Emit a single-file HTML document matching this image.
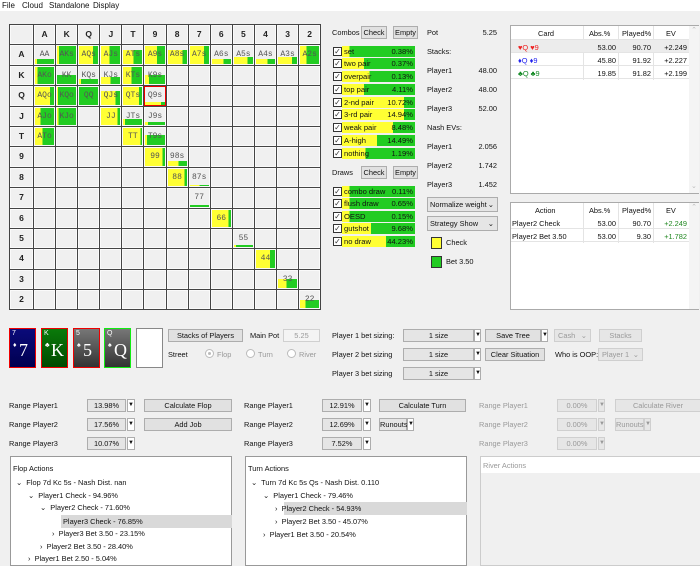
<!DOCTYPE html>
<html><head><meta charset="utf-8">
<style>
*{box-sizing:border-box;margin:0;padding:0}
body{width:700px;height:562px;background:#f0f0f0;font-family:"Liberation Sans",sans-serif;font-size:7.4px;color:#111;position:relative;overflow:hidden}
.a{position:absolute;white-space:nowrap}
.menu{position:absolute;left:0;top:0;width:700px;height:11px;background:#fff}
.menu span{position:absolute;top:1px;font-size:8px}
#grid{position:absolute;left:9px;top:24px;display:grid;grid-template-columns:23px repeat(13,21.1px);grid-template-rows:repeat(14,19.4px);gap:1px;background:#444;border:1px solid #444;width:312px}
#grid div{background:#f0f0f0;position:relative;font-family:"Liberation Mono",monospace;font-size:8px;color:#555;text-align:center;line-height:17px;border:1px solid #fafafa}
#grid div.h{font-family:"Liberation Sans",sans-serif;font-weight:bold;color:#222;font-size:8.5px}
#grid div i{position:absolute;left:0;bottom:0;width:100%}
#grid div b{position:relative;font-weight:normal}
.btn{position:absolute;background:#e1e1e1;border:1px solid #adadad;text-align:center;font-size:7.4px;line-height:11px;color:#111;white-space:nowrap}
.dis{color:#999;background:#e6e6e6;border-color:#cfcfcf}
.cb{position:absolute;width:9px;height:9px;border:1px solid #333;background:#fff;font-size:8px;line-height:7px;text-align:center;color:#333}
.bar{position:absolute;height:11px;font-size:7.6px;line-height:11px}
.bar .r{position:absolute;right:2px;top:0}
.bar .l{position:absolute;left:2px;top:0}
.sel{position:absolute;background:#e5e5e5;border:1px solid #adadad;font-size:7.4px;line-height:12px;text-align:center;white-space:nowrap}
.arr{position:absolute;background:#fff;border:1px solid #adadad;font-size:6px;line-height:11px;text-align:center}
.panel{position:absolute;background:#fff;border:1px solid #999}
.tbl{position:absolute;background:#fff;border:1px solid #aaa}
.tbl .row{position:absolute;left:0;width:178px;height:13px;border-bottom:1px solid #e4e4e4}
.card{position:absolute;width:27px;height:40px;color:#fff;font-family:"Liberation Serif",serif}
.card .s{position:absolute;left:2px;top:1px;font-size:7px;font-family:"Liberation Sans",sans-serif}
.card .b{position:absolute;left:4px;top:11px;font-size:18px}
.card .d{position:absolute;left:3px;top:12px;font-size:7px}
.tree span{position:absolute;font-size:7.4px;white-space:nowrap}
</style></head><body>
<div class="menu"><span style="left:2px">File</span><span style="left:22px">Cloud</span><span style="left:49px">Standalone</span><span style="left:93px">Display</span></div>

<div id="grid">
<div class="h"></div><div class="h">A</div><div class="h">K</div><div class="h">Q</div><div class="h">J</div><div class="h">T</div><div class="h">9</div><div class="h">8</div><div class="h">7</div><div class="h">6</div><div class="h">5</div><div class="h">4</div><div class="h">3</div><div class="h">2</div>
<div class="h">A</div>
<div><i style="height:28%;background:linear-gradient(90deg,#ff3 0 10%,#2c2 10%)"></i><b>AA</b></div>
<div><i style="height:100%;background:linear-gradient(90deg,#ff3 0 10%,#2c2 10%)"></i><b>AKs</b></div>
<div><i style="height:100%;background:linear-gradient(90deg,#ff3 0 75%,#2c2 75%)"></i><b>AQs</b></div>
<div><i style="height:100%;background:linear-gradient(90deg,#ff3 0 45%,#2c2 45%)"></i><b>AJs</b></div>
<div><i style="height:80%;background:linear-gradient(90deg,#ff3 0 55%,#2c2 55%)"></i><b>ATs</b></div>
<div><i style="height:100%;background:linear-gradient(90deg,#ff3 0 60%,#2c2 60%)"></i><b>A9s</b></div>
<div><i style="height:80%;background:linear-gradient(90deg,#ff3 0 75%,#2c2 75%)"></i><b>A8s</b></div>
<div><i style="height:100%;background:linear-gradient(90deg,#ff3 0 75%,#2c2 75%)"></i><b>A7s</b></div>
<div><i style="height:30%;background:linear-gradient(90deg,#ff3 0 60%,#2c2 60%)"></i><b>A6s</b></div>
<div><i style="height:40%;background:linear-gradient(90deg,#ff3 0 70%,#2c2 70%)"></i><b>A5s</b></div>
<div><i style="height:30%;background:linear-gradient(90deg,#ff3 0 60%,#2c2 60%)"></i><b>A4s</b></div>
<div><i style="height:40%;background:linear-gradient(90deg,#ff3 0 75%,#2c2 75%)"></i><b>A3s</b></div>
<div><i style="height:100%;background:linear-gradient(90deg,#ff3 0 35%,#2c2 35%)"></i><b>A2s</b></div>
<div class="h">K</div>
<div><i style="height:100%;background:linear-gradient(90deg,#ff3 0 12%,#2c2 12%)"></i><b>AKo</b></div>
<div><i style="height:50%;background:#2c2"></i><b>KK</b></div>
<div><i style="height:30%;background:linear-gradient(90deg,#ff3 0 10%,#2c2 10%)"></i><b>KQs</b></div>
<div><i style="height:40%;background:linear-gradient(90deg,#ff3 0 50%,#2c2 50%)"></i><b>KJs</b></div>
<div><i style="height:100%;background:linear-gradient(90deg,#ff3 0 45%,#2c2 45%)"></i><b>KTs</b></div>
<div><i style="height:50%;background:linear-gradient(90deg,#ff3 0 20%,#2c2 20%)"></i><b>K9s</b></div>
<div></div><div></div><div></div><div></div><div></div><div></div><div></div>
<div class="h">Q</div>
<div><i style="height:100%;background:linear-gradient(90deg,#ff3 0 80%,#2c2 80%)"></i><b>AQo</b></div>
<div><i style="height:100%;background:linear-gradient(90deg,#ff3 0 5%,#2c2 5%)"></i><b>KQo</b></div>
<div><i style="height:100%;background:#2c2"></i><b>QQ</b></div>
<div><i style="height:80%;background:linear-gradient(90deg,#ff3 0 75%,#2c2 75%)"></i><b>QJs</b></div>
<div><i style="height:100%;background:linear-gradient(90deg,#ff3 0 85%,#2c2 85%)"></i><b>QTs</b></div>
<div style="border:1.5px solid #e00"><i style="height:15%;background:linear-gradient(90deg,#ff3 0 80%,#2c2 80%)"></i><b>Q9s</b></div>
<div></div><div></div><div></div><div></div><div></div><div></div><div></div>
<div class="h">J</div>
<div><i style="height:100%;background:linear-gradient(90deg,#ff3 0 30%,#2c2 30%)"></i><b>AJo</b></div>
<div><i style="height:100%;background:linear-gradient(90deg,#ff3 0 8%,#2c2 8%)"></i><b>KJo</b></div>
<div></div>
<div><i style="height:100%;background:linear-gradient(90deg,#ff3 0 88%,#2c2 88%)"></i><b>JJ</b></div>
<div><i style="height:35%;background:linear-gradient(90deg,#ff3 0 10%,#2c2 10%)"></i><b>JTs</b></div>
<div><i style="height:18%;background:linear-gradient(90deg,#ff3 0 15%,#2c2 15%)"></i><b>J9s</b></div>
<div></div><div></div><div></div><div></div><div></div><div></div><div></div>
<div class="h">T</div>
<div><i style="height:100%;background:linear-gradient(90deg,#ff3 0 40%,#2c2 40%)"></i><b>ATo</b></div>
<div></div><div></div><div></div>
<div><i style="height:100%;background:linear-gradient(90deg,#ff3 0 92%,#2c2 92%)"></i><b>TT</b></div>
<div><i style="height:60%;background:linear-gradient(90deg,#ff3 0 10%,#2c2 10%)"></i><b>T9s</b></div>
<div></div><div></div><div></div><div></div><div></div><div></div><div></div>
<div class="h">9</div>
<div></div><div></div><div></div><div></div><div></div>
<div><i style="height:100%;background:linear-gradient(90deg,#ff3 0 88%,#2c2 88%)"></i><b>99</b></div>
<div><i style="height:30%;background:linear-gradient(90deg,#ff3 0 55%,#2c2 55%)"></i><b>98s</b></div>
<div></div><div></div><div></div><div></div><div></div><div></div>
<div class="h">8</div>
<div></div><div></div><div></div><div></div><div></div><div></div>
<div><i style="height:100%;background:linear-gradient(90deg,#ff3 0 88%,#2c2 88%)"></i><b>88</b></div>
<div><i style="height:6%;background:linear-gradient(90deg,#ff3 0 50%,#2c2 50%)"></i><b>87s</b></div>
<div></div><div></div><div></div><div></div><div></div>
<div class="h">7</div>
<div></div><div></div><div></div><div></div><div></div><div></div><div></div>
<div><i style="height:6%;background:#2c2"></i><b>77</b></div>
<div></div><div></div><div></div><div></div><div></div>
<div class="h">6</div>
<div></div><div></div><div></div><div></div><div></div><div></div><div></div><div></div>
<div><i style="height:100%;background:linear-gradient(90deg,#ff3 0 88%,#2c2 88%)"></i><b>66</b></div>
<div></div><div></div><div></div><div></div>
<div class="h">5</div>
<div></div><div></div><div></div><div></div><div></div><div></div><div></div><div></div><div></div>
<div><i style="height:12%;background:linear-gradient(90deg,#ff3 0 10%,#2c2 10%)"></i><b>55</b></div>
<div></div><div></div><div></div>
<div class="h">4</div>
<div></div><div></div><div></div><div></div><div></div><div></div><div></div><div></div><div></div><div></div>
<div><i style="height:100%;background:linear-gradient(90deg,#ff3 0 75%,#2c2 75%)"></i><b>44</b></div>
<div></div><div></div>
<div class="h">3</div>
<div></div><div></div><div></div><div></div><div></div><div></div><div></div><div></div><div></div><div></div><div></div>
<div><i style="height:50%;background:linear-gradient(90deg,#ff3 0 45%,#2c2 45%)"></i><b>33</b></div>
<div></div>
<div class="h">2</div>
<div></div><div></div><div></div><div></div><div></div><div></div><div></div><div></div><div></div><div></div><div></div><div></div>
<div><i style="height:50%;background:linear-gradient(90deg,#ff3 0 30%,#2c2 30%)"></i><b>22</b></div>
</div>

<div class="a" style="left:332px;top:28px">Combos</div>
<div class="btn" style="left:361px;top:26px;width:26px;height:13px">Check</div>
<div class="btn" style="left:393px;top:26px;width:25px;height:13px">Empty</div>

<div class="cb" style="left:333px;top:47px">✓</div><div class="bar" style="left:342px;top:46px;width:73px;background:linear-gradient(90deg,#ff3 0 10%,#2c2 10%)"><span class="l">set</span><span class="r">0.38%</span></div>
<div class="cb" style="left:333px;top:59px">✓</div><div class="bar" style="left:342px;top:58px;width:73px;background:linear-gradient(90deg,#ff3 0 30%,#2c2 30%)"><span class="l">two pair</span><span class="r">0.37%</span></div>
<div class="cb" style="left:333px;top:72px">✓</div><div class="bar" style="left:342px;top:71px;width:73px;background:linear-gradient(90deg,#ff3 0 38%,#2c2 38%)"><span class="l">overpair</span><span class="r">0.13%</span></div>
<div class="cb" style="left:333px;top:85px">✓</div><div class="bar" style="left:342px;top:84px;width:73px;background:linear-gradient(90deg,#ff3 0 30%,#2c2 30%)"><span class="l">top pair</span><span class="r">4.11%</span></div>
<div class="cb" style="left:333px;top:98px">✓</div><div class="bar" style="left:342px;top:97px;width:73px;background:linear-gradient(90deg,#ff3 0 85%,#2c2 85%)"><span class="l">2-nd pair</span><span class="r">10.72%</span></div>
<div class="cb" style="left:333px;top:110px">✓</div><div class="bar" style="left:342px;top:109px;width:73px;background:linear-gradient(90deg,#ff3 0 85%,#2c2 85%)"><span class="l">3-rd pair</span><span class="r">14.94%</span></div>
<div class="cb" style="left:333px;top:123px">✓</div><div class="bar" style="left:342px;top:122px;width:73px;background:linear-gradient(90deg,#ff3 0 70%,#2c2 70%)"><span class="l">weak pair</span><span class="r">8.48%</span></div>
<div class="cb" style="left:333px;top:136px">✓</div><div class="bar" style="left:342px;top:135px;width:73px;background:linear-gradient(90deg,#ff3 0 48%,#2c2 48%)"><span class="l">A-high</span><span class="r">14.49%</span></div>
<div class="cb" style="left:333px;top:149px">✓</div><div class="bar" style="left:342px;top:148px;width:73px;background:linear-gradient(90deg,#ff3 0 32%,#2c2 32%)"><span class="l">nothing</span><span class="r">1.19%</span></div>

<div class="a" style="left:332px;top:168px">Draws</div>
<div class="btn" style="left:361px;top:166px;width:26px;height:13px">Check</div>
<div class="btn" style="left:393px;top:166px;width:25px;height:13px">Empty</div>
<div class="cb" style="left:333px;top:187px">✓</div><div class="bar" style="left:342px;top:186px;width:73px;background:linear-gradient(90deg,#ff3 0 10%,#2c2 10%)"><span class="l">combo draw</span><span class="r">0.11%</span></div>
<div class="cb" style="left:333px;top:199px">✓</div><div class="bar" style="left:342px;top:198px;width:73px;background:linear-gradient(90deg,#ff3 0 10%,#2c2 10%)"><span class="l">flush draw</span><span class="r">0.65%</span></div>
<div class="cb" style="left:333px;top:212px">✓</div><div class="bar" style="left:342px;top:211px;width:73px;background:linear-gradient(90deg,#ff3 0 10%,#2c2 10%)"><span class="l">OESD</span><span class="r">0.15%</span></div>
<div class="cb" style="left:333px;top:224px">✓</div><div class="bar" style="left:342px;top:223px;width:73px;background:linear-gradient(90deg,#ff3 0 40%,#2c2 40%)"><span class="l">gutshot</span><span class="r">9.68%</span></div>
<div class="cb" style="left:333px;top:237px">✓</div><div class="bar" style="left:342px;top:236px;width:73px;background:linear-gradient(90deg,#ff3 0 60%,#2c2 60%)"><span class="l">no draw</span><span class="r">44.23%</span></div>

<div class="a" style="left:427px;top:28px">Pot</div><div class="a" style="left:470px;top:28px;width:27px;text-align:right">5.25</div>
<div class="a" style="left:427px;top:47px">Stacks:</div>
<div class="a" style="left:427px;top:66px">Player1</div><div class="a" style="left:470px;top:66px;width:27px;text-align:right">48.00</div>
<div class="a" style="left:427px;top:85px">Player2</div><div class="a" style="left:470px;top:85px;width:27px;text-align:right">48.00</div>
<div class="a" style="left:427px;top:104px">Player3</div><div class="a" style="left:470px;top:104px;width:27px;text-align:right">52.00</div>
<div class="a" style="left:427px;top:123px">Nash EVs:</div>
<div class="a" style="left:427px;top:142px">Player1</div><div class="a" style="left:470px;top:142px;width:27px;text-align:right">2.056</div>
<div class="a" style="left:427px;top:161px">Player2</div><div class="a" style="left:470px;top:161px;width:27px;text-align:right">1.742</div>
<div class="a" style="left:427px;top:180px">Player3</div><div class="a" style="left:470px;top:180px;width:27px;text-align:right">1.452</div>
<div class="sel" style="left:427px;top:197px;width:71px;height:15px;text-align:left;padding-left:2px;line-height:13px">Normalize weight <span style="position:absolute;right:3px">⌄</span></div>
<div class="sel" style="left:427px;top:216px;width:71px;height:15px;text-align:left;padding-left:2px;line-height:13px">Strategy Show <span style="position:absolute;right:3px">⌄</span></div>
<div class="a" style="left:431px;top:237px;width:11px;height:12px;background:#ff3;border:1px solid #333"></div><div class="a" style="left:446px;top:238px">Check</div>
<div class="a" style="left:431px;top:256px;width:11px;height:12px;background:#2c2;border:1px solid #333"></div><div class="a" style="left:446px;top:257px">Bet 3.50</div>

<div class="tbl" style="left:510px;top:25px;width:189px;height:169px">
 <div class="a" style="left:0;top:0;width:178px;height:14px;border-bottom:1px solid #e4e4e4"></div>
 <div class="a" style="left:72px;top:0;width:1px;height:54px;background:#e4e4e4"></div>
 <div class="a" style="left:107px;top:0;width:1px;height:54px;background:#e4e4e4"></div>
 <div class="a" style="left:142px;top:0;width:1px;height:54px;background:#e4e4e4"></div>
 <div class="a" style="left:178px;top:0;width:10px;height:167px;background:#f4f4f4;color:#bbb;text-align:center;font-size:7px">⌃<br><span style="position:absolute;left:2px;top:156px">⌄</span></div>
 <div class="a" style="left:27px;top:3px">Card</div><div class="a" style="left:78px;top:3px">Abs.%</div><div class="a" style="left:111px;top:3px">Played%</div><div class="a" style="left:155px;top:3px">EV</div>
 <div class="row" style="top:14px;background:#ececec"></div>
 <div class="row" style="top:27px"></div>
 <div class="row" style="top:40px"></div>
 <div class="a" style="left:7px;top:17px;color:#e22">♥Q ♥9</div><div class="a" style="left:72px;top:17px;width:33px;text-align:right">53.00</div><div class="a" style="left:107px;top:17px;width:33px;text-align:right">90.70</div><div class="a" style="left:142px;top:17px;width:34px;text-align:right">+2.249</div>
 <div class="a" style="left:7px;top:30px;color:#22e">♦Q ♦9</div><div class="a" style="left:72px;top:30px;width:33px;text-align:right">45.80</div><div class="a" style="left:107px;top:30px;width:33px;text-align:right">91.92</div><div class="a" style="left:142px;top:30px;width:34px;text-align:right">+2.227</div>
 <div class="a" style="left:7px;top:43px;color:#182">♣Q ♣9</div><div class="a" style="left:72px;top:43px;width:33px;text-align:right">19.85</div><div class="a" style="left:107px;top:43px;width:33px;text-align:right">91.82</div><div class="a" style="left:142px;top:43px;width:34px;text-align:right">+2.199</div>
</div>
<div class="tbl" style="left:510px;top:202px;width:189px;height:108px">
 <div class="a" style="left:72px;top:0;width:1px;height:40px;background:#e4e4e4"></div>
 <div class="a" style="left:107px;top:0;width:1px;height:40px;background:#e4e4e4"></div>
 <div class="a" style="left:142px;top:0;width:1px;height:40px;background:#e4e4e4"></div>
 <div class="a" style="left:178px;top:0;width:10px;height:106px;background:#f4f4f4;color:#bbb;text-align:center;font-size:7px">⌃</div>
 <div class="a" style="left:24px;top:3px">Action</div><div class="a" style="left:78px;top:3px">Abs.%</div><div class="a" style="left:111px;top:3px">Played%</div><div class="a" style="left:155px;top:3px">EV</div>
 <div class="row" style="top:13px"></div><div class="row" style="top:26px"></div>
 <div class="a" style="left:1px;top:16px">Player2 Check</div><div class="a" style="left:72px;top:16px;width:33px;text-align:right">53.00</div><div class="a" style="left:107px;top:16px;width:33px;text-align:right">90.70</div><div class="a" style="left:142px;top:16px;width:34px;text-align:right;color:#282">+2.249</div>
 <div class="a" style="left:1px;top:29px">Player2 Bet 3.50</div><div class="a" style="left:72px;top:29px;width:33px;text-align:right">53.00</div><div class="a" style="left:107px;top:29px;width:33px;text-align:right">9.30</div><div class="a" style="left:142px;top:29px;width:34px;text-align:right;color:#282">+1.782</div>
</div>

<div class="card" style="left:9px;top:328px;background:linear-gradient(#0a0a7a,#000050);border:1.5px solid #e00"><span class="s">7</span><span class="d">♦</span><span class="b" style="left:9px">7</span></div>
<div class="card" style="left:41px;top:328px;background:linear-gradient(#0a7a0a,#004a00);border:1.5px solid #e00"><span class="s">K</span><span class="d">♣</span><span class="b" style="left:9px">K</span></div>
<div class="card" style="left:73px;top:328px;background:linear-gradient(#777,#333);border:1.5px solid #e00"><span class="s">5</span><span class="d">♠</span><span class="b" style="left:9px">5</span></div>
<div class="card" style="left:104px;top:328px;background:linear-gradient(#777,#333);border:1.5px solid #1e1"><span class="s">Q</span><span class="d">♠</span><span class="b" style="left:9px">Q</span></div>
<div class="card" style="left:136px;top:328px;background:#fff;border:1.5px solid #888"></div>

<div class="btn" style="left:168px;top:329px;width:75px;height:13px">Stacks of Players</div>
<div class="a" style="left:250px;top:331px">Main Pot</div>
<div class="a" style="left:283px;top:329px;width:37px;height:13px;border:1px solid #d0d0d0;background:#f4f4f4;color:#999;text-align:center;line-height:11px">5.25</div>
<div class="a" style="left:168px;top:350px">Street</div>
<div class="a" style="left:205px;top:349px;width:9px;height:9px;border:1px solid #bbb;border-radius:50%;background:#fff"></div><div class="a" style="left:208px;top:352px;width:3px;height:3px;border-radius:50%;background:#bbb"></div><div class="a" style="left:217px;top:350px;color:#999">Flop</div>
<div class="a" style="left:246px;top:349px;width:9px;height:9px;border:1px solid #bbb;border-radius:50%;background:#fff"></div><div class="a" style="left:258px;top:350px;color:#999">Turn</div>
<div class="a" style="left:287px;top:349px;width:9px;height:9px;border:1px solid #bbb;border-radius:50%;background:#fff"></div><div class="a" style="left:299px;top:350px;color:#999">River</div>

<div class="a" style="left:332px;top:331px">Player 1 bet sizing:</div>
<div class="a" style="left:332px;top:350px">Player 2 bet sizing</div>
<div class="a" style="left:332px;top:369px">Player 3 bet sizing</div>
<div class="sel" style="left:403px;top:329px;width:71px;height:13px;line-height:11px">1 size</div><div class="arr" style="left:474px;top:329px;width:7px;height:13px">▼</div>
<div class="sel" style="left:403px;top:348px;width:71px;height:13px;line-height:11px">1 size</div><div class="arr" style="left:474px;top:348px;width:7px;height:13px">▼</div>
<div class="sel" style="left:403px;top:367px;width:71px;height:13px;line-height:11px">1 size</div><div class="arr" style="left:474px;top:367px;width:7px;height:13px">▼</div>
<div class="btn" style="left:485px;top:329px;width:56px;height:13px">Save Tree</div><div class="arr" style="left:541px;top:329px;width:7px;height:13px">▼</div>
<div class="btn" style="left:485px;top:348px;width:60px;height:13px">Clear Situation</div>
<div class="btn dis" style="left:554px;top:329px;width:37px;height:13px;text-align:left;padding-left:3px">Cash <span style="position:absolute;right:3px">⌄</span></div>
<div class="btn dis" style="left:599px;top:329px;width:43px;height:13px">Stacks</div>
<div class="a" style="left:555px;top:350px">Who is OOP:</div>
<div class="btn dis" style="left:598px;top:348px;width:45px;height:13px;text-align:left;padding-left:3px">Player 1 <span style="position:absolute;right:3px">⌄</span></div>

<div class="a" style="left:9px;top:401px">Range Player1</div>
<div class="a" style="left:9px;top:420px">Range Player2</div>
<div class="a" style="left:9px;top:439px">Range Player3</div>
<div class="sel" style="left:87px;top:399px;width:39px;height:13px;line-height:11px">13.98%</div><div class="arr" style="left:127px;top:399px;width:8px;height:13px">▼</div>
<div class="sel" style="left:87px;top:418px;width:39px;height:13px;line-height:11px">17.56%</div><div class="arr" style="left:127px;top:418px;width:8px;height:13px">▼</div>
<div class="sel" style="left:87px;top:437px;width:39px;height:13px;line-height:11px">10.07%</div><div class="arr" style="left:127px;top:437px;width:8px;height:13px">▼</div>
<div class="btn" style="left:144px;top:399px;width:88px;height:13px">Calculate Flop</div>
<div class="btn" style="left:144px;top:418px;width:88px;height:13px">Add Job</div>

<div class="a" style="left:244px;top:401px">Range Player1</div>
<div class="a" style="left:244px;top:420px">Range Player2</div>
<div class="a" style="left:244px;top:439px">Range Player3</div>
<div class="sel" style="left:322px;top:399px;width:40px;height:13px;line-height:11px">12.91%</div><div class="arr" style="left:363px;top:399px;width:8px;height:13px">▼</div>
<div class="sel" style="left:322px;top:418px;width:40px;height:13px;line-height:11px">12.69%</div><div class="arr" style="left:363px;top:418px;width:8px;height:13px">▼</div>
<div class="sel" style="left:322px;top:437px;width:40px;height:13px;line-height:11px">7.52%</div><div class="arr" style="left:363px;top:437px;width:8px;height:13px">▼</div>
<div class="btn" style="left:379px;top:399px;width:87px;height:13px">Calculate Turn</div>
<div class="sel" style="left:379px;top:418px;width:28px;height:13px;line-height:11px">Runouts</div><div class="arr" style="left:407px;top:418px;width:7px;height:13px">▼</div>

<div class="a" style="left:479px;top:401px;color:#999">Range Player1</div>
<div class="a" style="left:479px;top:420px;color:#999">Range Player2</div>
<div class="a" style="left:479px;top:439px;color:#999">Range Player3</div>
<div class="btn dis" style="left:557px;top:399px;width:40px;height:13px">0.00%</div><div class="btn dis" style="left:598px;top:399px;width:7px;height:13px;font-size:6px">▼</div>
<div class="btn dis" style="left:557px;top:418px;width:40px;height:13px">0.00%</div><div class="btn dis" style="left:598px;top:418px;width:7px;height:13px;font-size:6px">▼</div>
<div class="btn dis" style="left:557px;top:437px;width:40px;height:13px">0.00%</div><div class="btn dis" style="left:598px;top:437px;width:7px;height:13px;font-size:6px">▼</div>
<div class="btn dis" style="left:615px;top:399px;width:86px;height:13px">Calculate River</div>
<div class="btn dis" style="left:615px;top:418px;width:29px;height:13px">Runouts</div><div class="btn dis" style="left:644px;top:418px;width:7px;height:13px;font-size:6px">▼</div>

<div class="panel tree" style="left:10px;top:456px;width:222px;height:110px">
 <span style="left:2px;top:7px">Flop Actions</span>
 <span style="left:5px;top:21px">⌄&nbsp; Flop 7d Kc 5s - Nash Dist. nan</span>
 <span style="left:17px;top:34px">⌄&nbsp; Player1 Check - 94.96%</span>
 <span style="left:29px;top:46px">⌄&nbsp; Player2 Check - 71.60%</span>
 <div class="a" style="left:50px;top:58px;width:171px;height:13px;background:#d9d9d9"></div>
 <span style="left:52px;top:60px">Player3 Check - 76.85%</span>
 <span style="left:41px;top:72px">›&nbsp; Player3 Bet 3.50 - 23.15%</span>
 <span style="left:29px;top:85px">›&nbsp; Player2 Bet 3.50 - 28.40%</span>
 <span style="left:17px;top:97px">›&nbsp; Player1 Bet 2.50 - 5.04%</span>
</div>
<div class="panel tree" style="left:245px;top:456px;width:222px;height:110px">
 <span style="left:2px;top:7px">Turn Actions</span>
 <span style="left:5px;top:21px">⌄&nbsp; Turn 7d Kc 5s Qs - Nash Dist. 0.110</span>
 <span style="left:17px;top:34px">⌄&nbsp; Player1 Check - 79.46%</span>
 <div class="a" style="left:38px;top:45px;width:183px;height:13px;background:#d9d9d9"></div>
 <span style="left:29px;top:47px">›&nbsp; Player2 Check - 54.93%</span>
 <span style="left:29px;top:60px">›&nbsp; Player2 Bet 3.50 - 45.07%</span>
 <span style="left:17px;top:73px">›&nbsp; Player1 Bet 3.50 - 20.54%</span>
</div>
<div class="panel tree" style="left:480px;top:456px;width:221px;height:110px;background:#f0f0f0;border-color:#ccc">
 <div class="a" style="left:0;top:0;width:220px;height:16px;background:#fff"></div>
 <span style="left:2px;top:4px;color:#999">River Actions</span>
</div>
</body></html>
